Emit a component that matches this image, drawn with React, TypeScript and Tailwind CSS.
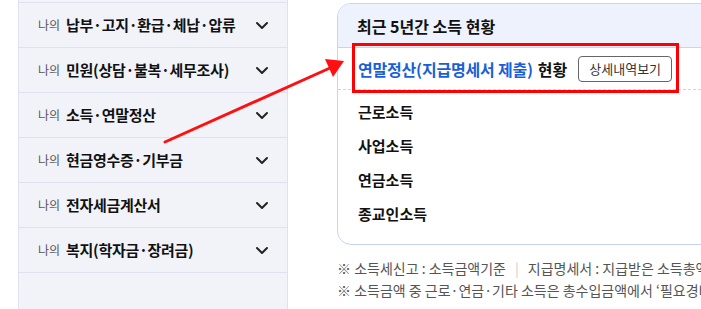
const menus = [
  '납부·고지·환급·체납·압류',
  '민원(상담·불복·세무조사)',
  '소득·연말정산',
  '현금영수증·기부금',
  '전자세금계산서',
  '복지(학자금·장려금)',
]

const incomes = ['근로소득', '사업소득', '연금소득', '종교인소득']

function Chevron() {
  return (
    <svg width="14" height="9" viewBox="0 0 14 9" fill="none" className="shrink-0">
      <path d="M2 2l5 5 5-5" stroke="#222" strokeWidth="2" strokeLinecap="round" strokeLinejoin="round" />
    </svg>
  )
}

export default function App() {
  return (
    <div
      className="relative w-[701px] h-[309px] overflow-hidden bg-white flex"
      style={{ fontFamily: '"Noto Sans CJK KR", "Noto Sans", sans-serif' }}
    >
      {/* Sidebar */}
      <div className="ml-[18px] w-[270px] shrink-0 h-full bg-[#f2f3f8] border-x border-[#dfe2ee] flex flex-col">
        <div className="h-[2px]" />
        {menus.map(m => (
          <div key={m} className="h-[45px] border-t border-[#dfe2ee] flex items-center pl-[19px] pr-[18px]">
            <span className="text-[12px] text-[#555] mr-[6px]">나의</span>
            <span className="text-[15px] font-bold text-[#111] tracking-[-0.3px]">{m}</span>
            <span className="ml-auto"><Chevron /></span>
          </div>
        ))}
        <div className="border-t border-[#dfe2ee]" />
      </div>

      {/* Main */}
      <div className="ml-[49px] shrink-0 flex flex-col">
        <div className="mt-[3px] w-[430px] rounded-[14px] border border-[#c6d5f0] overflow-hidden">
          <div className="h-[44px] bg-[#edf2fd] border-b border-[#c6d5f0] flex items-center pl-[19px]">
            <span className="text-[16px] font-bold text-[#111]">최근 5년간 소득 현황</span>
          </div>
          <div className="h-[42px] border-b border-dashed border-[#cfd3da] flex items-center pl-[20px]">
            <span className="text-[16px] font-bold text-[#1a5fd6] tracking-[-0.2px]">연말정산(지급명세서 제출)</span>
            <span className="text-[16px] font-bold text-[#111] ml-[5px]">현황</span>
            <button className="ml-[11px] h-[26px] px-[10px] rounded-[4px] border border-[#666] text-[13px] text-[#333] bg-white">
              상세내역보기
            </button>
          </div>
          <div className="pt-[5px] pb-[13px] pl-[20px]">
            {incomes.map(i => (
              <div key={i} className="h-[34px] leading-[34px] text-[15px] font-bold text-[#111]">{i}</div>
            ))}
          </div>
        </div>

        <div className="mt-[12px] text-[14px] text-[#555] whitespace-nowrap leading-[22px]">
          <div>
            ※ 소득세신고 : 소득금액기준
            <span className="text-[#ccc] mx-[9px]">|</span>
            지급명세서 : 지급받은 소득총액기준
          </div>
          <div>※ 소득금액 중 근로·연금·기타 소득은 총수입금액에서 ‘필요경비’를 뺀 금액</div>
        </div>
      </div>

      {/* Annotation overlay */}
      <div className="absolute left-[352px] top-[43px] w-[327px] h-[50px] border-[3px] border-[#ff0000] pointer-events-none" />
      <svg className="absolute left-0 top-0 pointer-events-none" width="701" height="309" viewBox="0 0 701 309">
        <line x1="165" y1="142" x2="330" y2="68" stroke="#ff1010" strokeWidth="3" strokeLinecap="round" />
        <polygon points="344,61 325,59 333,77" fill="#ff1010" />
      </svg>
    </div>
  )
}
